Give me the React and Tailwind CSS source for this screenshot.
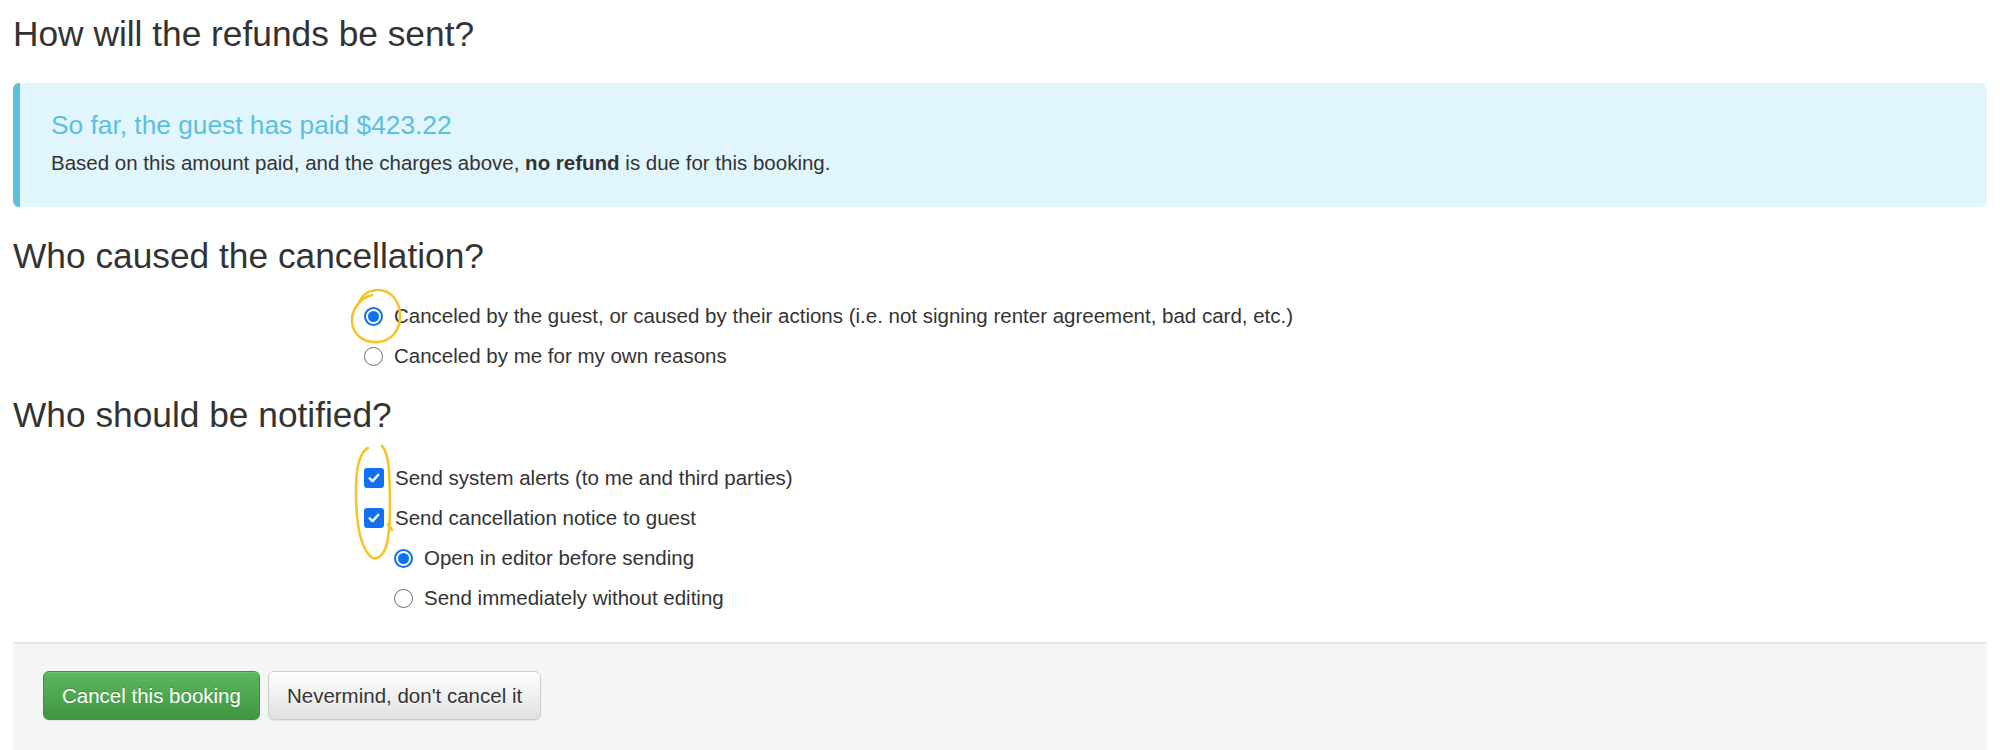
function Radio({ checked }) {
  if (checked) {
    return (
      <span className="flex h-[19px] w-[19px] shrink-0 items-center justify-center rounded-full border-2 border-[#1170f2] bg-white">
        <span className="h-[11px] w-[11px] rounded-full bg-[#1170f2]" />
      </span>
    );
  }
  return <span className="h-[19px] w-[19px] shrink-0 rounded-full border-[1.5px] border-[#6f6f6f] bg-white" />;
}

function Checkbox() {
  return (
    <span className="flex h-[20px] w-[20px] shrink-0 items-center justify-center rounded-[3px] bg-[#1170f2]">
      <svg width="14" height="14" viewBox="0 0 13 13" fill="none">
        <path d="M2.5 6.8 L5.2 9.5 L10.5 3.5" stroke="white" strokeWidth="2.2" strokeLinecap="round" strokeLinejoin="round" />
      </svg>
    </span>
  );
}

function Option({ control, children, indent }) {
  return (
    <label className={`flex h-[30px] items-center gap-[11px] ${indent ? "pl-[30px]" : ""}`}>
      {control}
      <span>{children}</span>
    </label>
  );
}

export default function App() {
  return (
    <div
      className="relative min-h-[750px] bg-white px-[13px] text-[20.5px] leading-[30px] text-[#333]"
      style={{ fontFamily: '"Liberation Sans", Arial, sans-serif' }}
    >
      <h2 className="pt-[14px] text-[35.3px] leading-[40px]">How will the refunds be sent?</h2>

      <div className="mt-[29px] rounded-[6px] border-l-[7px] border-[#5bc0de] bg-[#e1f5fc] pb-[29px] pl-[31px] pt-[28px]">
        <h4 className="text-[26.3px] leading-[29px] text-[#5bc0de]">So far, the guest has paid $423.22</h4>
        <p className="mt-[8px]">
          Based on this amount paid, and the charges above, <b>no refund</b> is due for this booking.
        </p>
      </div>

      <h2 className="mt-[29px] text-[35.3px] leading-[40px]">Who caused the cancellation?</h2>
      <div className="mt-[25px] flex flex-col gap-[10px] pl-[351px]">
        <Option control={<Radio checked />}>
          Canceled by the guest, or caused by their actions (i.e. not signing renter agreement, bad card, etc.)
        </Option>
        <Option control={<Radio />}>Canceled by me for my own reasons</Option>
      </div>

      <h2 className="mt-[24px] text-[35.3px] leading-[40px]">Who should be notified?</h2>
      <div className="mt-[28px] flex flex-col gap-[10px] pl-[351px]">
        <Option control={<Checkbox />}>Send system alerts (to me and third parties)</Option>
        <Option control={<Checkbox />}>Send cancellation notice to guest</Option>
        <Option indent control={<Radio checked />}>Open in editor before sending</Option>
        <Option indent control={<Radio />}>Send immediately without editing</Option>
      </div>

      <div className="mt-[29px] flex gap-[8px] border-t-2 border-[#e5e5e5] bg-[#f5f5f5] pb-[32px] pl-[30px] pt-[27px]">
        <button className="h-[49px] rounded-[6px] border border-[#3e8f3e] bg-linear-to-b from-[#5cb85c] to-[#419641] px-[18px] text-white shadow-[inset_0_1px_0_rgba(255,255,255,0.15),0_1px_1px_rgba(0,0,0,0.075)] [text-shadow:0_-1px_0_rgba(0,0,0,0.2)]">
          Cancel this booking
        </button>
        <button className="h-[49px] rounded-[6px] border border-[#cccccc] bg-linear-to-b from-white to-[#e0e0e0] px-[18px] text-[#333] shadow-[inset_0_1px_0_rgba(255,255,255,0.15),0_1px_1px_rgba(0,0,0,0.075)] [text-shadow:0_1px_0_#fff]">
          Nevermind, don't cancel it
        </button>
      </div>

      <svg className="pointer-events-none absolute left-0 top-0" width="2000" height="750" fill="none">
        <path
          d="M372 295 C360 298 351 310 352 322 C353 336 365 343 378 342 C391 341 400 331 400 316 C400 300 390 290 378 290 C369 290 362 295 359 303"
          stroke="#f6c42a"
          strokeWidth="2.6"
          strokeLinecap="round"
        />
        <path
          d="M368 448 C360 452 356 466 356 491 C356 521 359 546 371 557 C378 562 386 553 388 538 C391 520 390 490 389 470 C388 458 386 450 382 446 M388 524 L392 530"
          stroke="#f6c42a"
          strokeWidth="2.6"
          strokeLinecap="round"
        />
      </svg>
    </div>
  );
}
